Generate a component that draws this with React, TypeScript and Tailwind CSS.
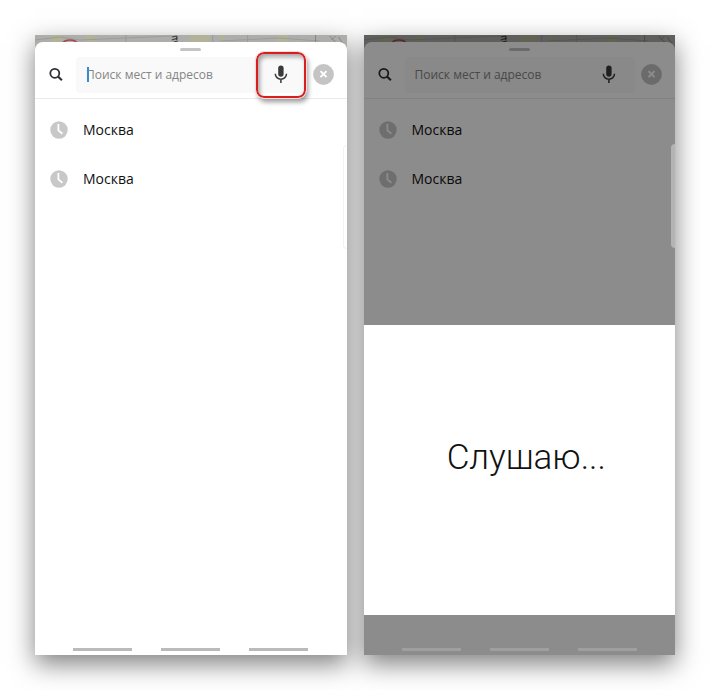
const recent = ["Москва", "Москва"];

const MapStrip = () => (
  <svg
    className="absolute inset-x-0 top-0 h-4 w-full"
    viewBox="0 0 312 16"
    preserveAspectRatio="none"
    aria-hidden="true"
  >
    <rect width="312" height="16" fill="#adadab" />
    <path d="M16 0h11v7H16zM51 0h9v7h-9zM155 0h20v7h-20zM185 0h4v7h-4zM242 0h12v7h-12z" fill="#b1b298" />
    <path d="M0 5l25-3 20 3 46-2 45-2M185 6l60-3 40 3" stroke="#9c9c9a" fill="none" />
    <path d="M91 0v7M178 0v7M213 0v7" stroke="#999" fill="none" />
    <path d="M27 9a8.500 6 0 0 1 16 0" stroke="#a8474a" strokeWidth="1.500" fill="none" />
    <path d="M137 2l5-1M137 5l6-2M139 7l4-1M142 1v4" stroke="#3f3f3f" strokeWidth="1.200" fill="none" />
    <path d="M281 0v7M295 1l6 6M301 1l-4 4M304 2l6 9" stroke="#858585" fill="none" />
  </svg>
);

const SearchIcon = () => (
  <svg className="size-4 shrink-0" viewBox="0 0 16 16" fill="none" stroke="#2e2e33" aria-hidden="true">
    <circle cx="6.800" cy="6.300" r="4.500" strokeWidth="1.800" />
    <path d="M10 9.500l3.900 3.700" strokeWidth="2.200" />
  </svg>
);

const MicIcon = () => (
  <svg className="h-5 w-4" viewBox="0 0 16 20" fill="none" aria-hidden="true">
    <rect x="5.200" y="0.500" width="5.400" height="11.200" rx="2.700" fill="#3a3a3a" />
    <path d="M2.300 8.800a5.600 5.400 0 0 0 11.200 0M7.900 14.200V18" stroke="#3a3a3a" strokeWidth="1.500" />
  </svg>
);

const CloseIcon = () => (
  <svg className="size-[21px]" viewBox="0 0 21 21" aria-hidden="true">
    <circle cx="10.500" cy="10.500" r="10.400" fill="#c4c4c4" />
    <path d="M7.500 7.200l6 6M13.500 7.200l-6 6" stroke="#fff" strokeWidth="1.900" />
  </svg>
);

const ClockIcon = () => (
  <svg className="size-[18px] shrink-0" viewBox="0 0 18 18" aria-hidden="true">
    <circle cx="9" cy="9" r="8.700" fill="#c8c8c8" />
    <path d="M8.400 3v6.400l4 3.400" stroke="#fff" strokeWidth="1.800" fill="none" />
  </svg>
);

const NavBar = ({ dark }: { dark?: boolean }) => (
  <div className="absolute inset-x-0 bottom-1 flex justify-center gap-[29px]">
    {[0, 1, 2].map((i) => (
      <span key={i} className={dark ? "h-[3px] w-[59px] bg-[#9f9f9f]" : "h-[3px] w-[59px] bg-[#bababa]"} />
    ))}
  </div>
);

const Listening = () => (
  <div className="absolute inset-0 flex flex-col">
    <div className="flex-1 bg-black/45" />
    <div role="dialog" aria-label="Слушаю" className="flex h-[290px] items-center justify-center bg-white pl-[14px]">
      <p className="pb-6 font-[Roboto,sans-serif] text-[35px] leading-10 font-light text-[#111]">Слушаю...</p>
    </div>
    <div className="h-10 bg-black/45" />
    <span className="absolute top-[109px] right-0 h-[104px] w-1 rounded-l-sm bg-[#b4b4b4]" />
  </div>
);

const Phone = ({ listening }: { listening?: boolean }) => (
  <section className="relative flex-1 before:absolute before:inset-0 before:-z-10 before:shadow-[0_9px_24px_rgba(0,0,0,0.5)]">
    <div className="relative flex h-full flex-col overflow-hidden bg-[#adadab] pt-[7px]">
      <MapStrip />
      <div className="relative flex-1 rounded-t-lg bg-white">
        <div className="flex justify-center pt-[6px]">
          <span className="h-[3px] w-[21px] rounded-full bg-[#c4c4c4]" />
        </div>
        <form className="flex h-12 items-center border-b border-[#ebebeb] px-[13px]">
          <SearchIcon />
          <div className="relative ml-3 flex h-9 flex-1 items-center rounded bg-[#f9f9f9]">
            {!listening && <span className="absolute left-[11px] h-[15px] w-[2px] bg-[#3b8ad0]" />}
            <input
              type="text"
              aria-label="Поиск мест и адресов"
              placeholder="Поиск мест и адресов"
              className="min-w-0 flex-1 bg-transparent pl-[10px] text-[12px] outline-none placeholder:text-[#858585]"
            />
            <button
              type="button"
              aria-label="Голосовой ввод"
              className="relative flex w-[52px] items-center justify-center"
            >
              {!listening && (
                <span className="absolute h-[46px] w-[50px] rounded-lg border-2 border-[#d81e1e] shadow-[2px_4px_5px_rgba(0,0,0,0.4),inset_2px_3px_4px_rgba(0,0,0,0.35)] outline-1 outline-[#f3dcdc]" />
              )}
              <MicIcon />
            </button>
          </div>
          <button type="button" aria-label="Очистить" className="ml-[6px]">
            <CloseIcon />
          </button>
        </form>
        <ul className="pt-[6px]">
          {recent.map((name, i) => (
            <li key={i}>
              <a href="#" className="flex h-[49px] items-center gap-[15px] pl-[15px] text-[14px] text-[#111]">
                <ClockIcon />
                {name}
              </a>
            </li>
          ))}
        </ul>
        {!listening && (
          <span className="absolute top-[103px] right-0 h-[104px] w-1 rounded-l-sm border border-r-0 border-[#f3f3f3]" />
        )}
      </div>
      {listening && <Listening />}
      <NavBar dark={listening} />
    </div>
  </section>
);

const App = () => {
  return (
    <main className="isolate flex min-h-screen gap-[17px] bg-white p-[35px] font-['Open_Sans',sans-serif]">
      <Phone />
      <Phone listening />
    </main>
  );
};

export default App;
